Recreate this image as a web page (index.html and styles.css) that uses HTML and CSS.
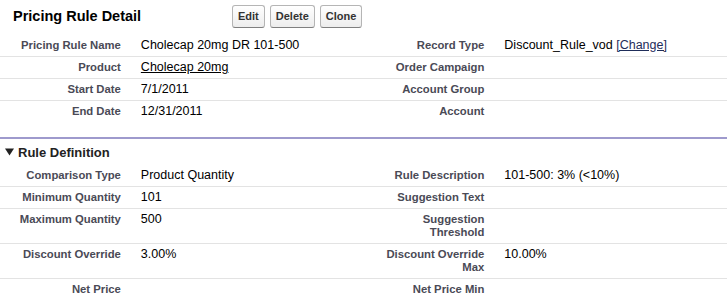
FILE: index.html
```html
<!DOCTYPE html>
<html lang="en">
<head>
  <meta charset="UTF-8" />
  <title>Pricing Rule Detail</title>
  <link rel="stylesheet" href="styles.css">
</head>
<body>
  <div class="block">
    <div class="block-header">
      <h2 class="block-title">Pricing Rule Detail</h2>
      <div class="buttons">
        <button class="btn">Edit</button>
        <button class="btn">Delete</button>
        <button class="btn">Clone</button>
      </div>
    </div>

    <table class="detail-list">
      <tr>
        <td class="label-col">Pricing Rule Name</td>
        <td class="data-col">Cholecap 20mg DR 101-500</td>
        <td class="label-col">Record Type</td>
        <td class="data-col">Discount_Rule_vod <a href="#" class="change-link">[Change]</a></td>
      </tr>
      <tr>
        <td class="label-col">Product</td>
        <td class="data-col"><a href="#" class="record-link">Cholecap 20mg</a></td>
        <td class="label-col">Order Campaign</td>
        <td class="data-col"></td>
      </tr>
      <tr>
        <td class="label-col">Start Date</td>
        <td class="data-col">7/1/2011</td>
        <td class="label-col">Account Group</td>
        <td class="data-col"></td>
      </tr>
      <tr class="last">
        <td class="label-col">End Date</td>
        <td class="data-col">12/31/2011</td>
        <td class="label-col">Account</td>
        <td class="data-col"></td>
      </tr>
    </table>

    <div class="section">
      <h3 class="section-header">
        <svg class="twisty" width="9" height="8" viewBox="0 0 9 8"><path d="M0 0.5h9L4.5 7.5z" fill="#222"/></svg>
        Rule Definition
      </h3>
      <table class="detail-list">
        <tr>
          <td class="label-col">Comparison Type</td>
          <td class="data-col">Product Quantity</td>
          <td class="label-col">Rule Description</td>
          <td class="data-col">101-500: 3% (&lt;10%)</td>
        </tr>
        <tr>
          <td class="label-col">Minimum Quantity</td>
          <td class="data-col">101</td>
          <td class="label-col">Suggestion Text</td>
          <td class="data-col"></td>
        </tr>
        <tr>
          <td class="label-col">Maximum Quantity</td>
          <td class="data-col">500</td>
          <td class="label-col">Suggestion<br>Threshold</td>
          <td class="data-col"></td>
        </tr>
        <tr>
          <td class="label-col">Discount Override</td>
          <td class="data-col">3.00%</td>
          <td class="label-col">Discount Override<br>Max</td>
          <td class="data-col">10.00%</td>
        </tr>
        <tr class="last">
          <td class="label-col">Net Price</td>
          <td class="data-col"></td>
          <td class="label-col">Net Price Min</td>
          <td class="data-col"></td>
        </tr>
      </table>
    </div>
  </div>
</body>
</html>
```

FILE: styles.css
```css
* {
  box-sizing: border-box;
  margin: 0;
  padding: 0;
}

body {
  background: #fff;
  color: #000;
  font-family: "Liberation Sans", Arial, sans-serif;
  font-size: 12px;
}

.block {
  width: 727px;
}

.block-header {
  display: flex;
  align-items: center;
  height: 35px;
  padding-bottom: 3px;
}

.block-title {
  width: 232px;
  padding-left: 13px;
  font-size: 14.5px;
  font-weight: bold;
  color: #000;
}

.buttons {
  display: flex;
  gap: 5px;
}

.btn {
  height: 23px;
  padding: 0 5px;
  font-family: "Liberation Sans", Arial, sans-serif;
  font-size: 11px;
  font-weight: bold;
  color: #333;
  background: linear-gradient(#fff, #ededed);
  border: 1px solid #b5b5b5;
  border-bottom-color: #7f7f7f;
  border-radius: 3px;
  cursor: pointer;
}

.detail-list {
  width: 100%;
  border-collapse: collapse;
  table-layout: fixed;
}

.detail-list td {
  padding: 4px 10px 4px 10px;
  line-height: 13px;
  vertical-align: top;
  border-bottom: 1px solid #e3e3e3;
}

.detail-list tr.last td {
  border-bottom: none;
}

.label-col {
  width: 18%;
  text-align: right;
  font-size: 11.3px;
  font-weight: bold;
  color: #4a4a56;
}

.data-col {
  width: 32%;
  font-size: 12.5px;
}

.record-link {
  color: #000;
}

.change-link {
  color: #1f2d5a;
}

.section {
  margin-top: 15px;
  border-top: 2px solid #9e9acd;
}

.section-header {
  display: flex;
  align-items: center;
  gap: 4px;
  height: 26px;
  padding-left: 5px;
  font-size: 13px;
  font-weight: bold;
  color: #222;
}
```
